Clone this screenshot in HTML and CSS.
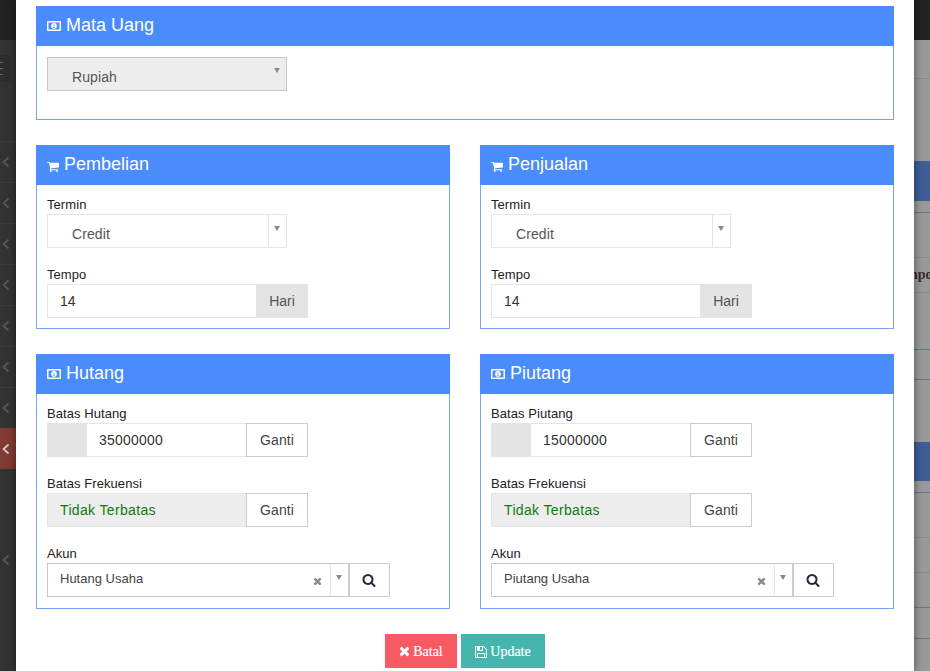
FILE: index.html
```html
<!DOCTYPE html>
<html lang="id">
<head>
<meta charset="utf-8">
<title>Pengaturan</title>
<link rel="stylesheet" href="styles.css">
</head>
<body>
<svg class="defs" width="0" height="0" aria-hidden="true">
  <symbol id="i-money" viewBox="0 0 14 10">
    <path fill-rule="evenodd" d="M1 0h12a1 1 0 0 1 1 1v8a1 1 0 0 1-1 1H1a1 1 0 0 1-1-1V1a1 1 0 0 1 1-1zM1.500 1.600v6.800h11V1.600zM7 2.100c1.700 0 2.900 1.300 2.900 2.900S8.700 7.900 7 7.900 4.100 6.600 4.100 5 5.300 2.100 7 2.100zM6.300 3.500v.7h.4v2.100h-.5v.6h1.500v-.6h-.4V3.500z"/>
  </symbol>
  <symbol id="i-cart" viewBox="0 128 1664 1536">
    <path d="M640 1536q0 52-38 90t-90 38-90-38-38-90 38-90 90-38 90 38 38 90zm896 0q0 52-38 90t-90 38-90-38-38-90 38-90 90-38 90 38 38 90zm128-1088v512q0 24-16.500 42.500t-40.500 21.500l-1044 122q13 60 13 70 0 16-24 64h920q26 0 45 19t19 45-19 45-45 19h-1024q-26 0-45-19t-19-45q0-11 8-31.500t16-36 21.500-40 15.500-29.500l-177-823h-204q-26 0-45-19t-19-45 19-45 45-19h256q16 0 28.500 6.500t19.500 15.500 13 24.500 8 26 5.500 29.500 4.500 26h1201q26 0 45 19t19 45z"/>
  </symbol>
  <symbol id="i-search" viewBox="0 0 1792 1792">
    <path d="M1216 832q0-185-131.500-316.500t-316.500-131.500-316.500 131.500-131.500 316.500 131.500 316.500 316.500 131.500 316.500-131.500 131.500-316.500zm512 832q0 52-38 90t-90 38q-54 0-90-38l-343-342q-179 124-399 124-143 0-273.500-55.500t-225-150-150-225-55.500-273.500 55.500-273.500 150-225 225-150 273.500-55.500 273.500 55.500 225 150 150 225 55.500 273.500q0 220-124 399l343 343q37 37 37 90z"/>
  </symbol>
  <symbol id="i-times" viewBox="0 256 1408 1408">
    <path d="M1298 1322q0 40-28 68l-136 136q-28 28-68 28t-68-28l-294-294-294 294q-28 28-68 28t-68-28l-136-136q-28-28-28-68t28-68l294-294-294-294q-28-28-28-68t28-68l136-136q28-28 68-28t68 28l294 294 294-294q28-28 68-28t68 28l136 136q28 28 28 68t-28 68l-294 294 294 294q28 28 28 68z"/>
  </symbol>
  <symbol id="i-save" viewBox="0 128 1536 1536">
    <path d="M384 1536h768v-384h-768v384zm896 0h128v-896q0-14-10-38.500t-20-34.500l-281-281q-10-10-34-20t-39-10v416q0 40-28 68t-68 28h-576q-40 0-68-28t-28-68v-416h-128v1280h128v-416q0-40 28-68t68-28h832q40 0 68 28t28 68v416zm-384-928v-320q0-13-9.500-22.500t-22.500-9.500h-192q-13 0-22.500 9.500t-9.500 22.500v320q0 13 9.500 22.500t22.500 9.500h192q13 0 22.500-9.500t9.500-22.500zm640 32v928q0 40-28 68t-68 28h-1344q-40 0-68-28t-28-68v-1344q0-40 28-68t68-28h928q40 0 88 20t76 48l280 280q28 28 48 76t20 88z"/>
  </symbol>
  <symbol id="i-chev" viewBox="0 0 8 10">
    <path d="M6.500 0.500 1.500 5l5 4.500" fill="none" stroke="currentColor" stroke-width="1.800"/>
  </symbol>
</svg>

<div class="backdrop">
  <aside class="side">
    <div class="side-top"></div>
    <div class="side-burger"><div class="burger-box"><span></span><span></span><span></span></div></div>
    <div class="side-row"><svg class="chev"><use href="#i-chev"/></svg></div>
    <div class="side-row"><svg class="chev"><use href="#i-chev"/></svg></div>
    <div class="side-row"><svg class="chev"><use href="#i-chev"/></svg></div>
    <div class="side-row"><svg class="chev"><use href="#i-chev"/></svg></div>
    <div class="side-row"><svg class="chev"><use href="#i-chev"/></svg></div>
    <div class="side-row"><svg class="chev"><use href="#i-chev"/></svg></div>
    <div class="side-row"><svg class="chev"><use href="#i-chev"/></svg></div>
    <div class="side-row side-active"><svg class="chev"><use href="#i-chev"/></svg></div>
    <div class="side-row side-plain"><svg class="chev"><use href="#i-chev"/></svg></div>
  </aside>
  <div class="right">
    <div class="r r-top"></div>
    <div class="r r-a"></div>
    <div class="r r-b"></div>
    <div class="r r-band1"></div>
    <div class="r r-c"></div>
    <div class="r r-d"></div>
    <div class="r r-e"><span class="clip">npo</span></div>
    <div class="r r-f"></div>
    <div class="r r-g"></div>
    <div class="r r-h"></div>
    <div class="r r-band2"></div>
    <div class="r r-i"></div>
    <div class="r r-j"></div>
    <div class="r r-k"></div>
    <div class="r r-l"></div>
    <div class="r r-m"></div>
    <div class="r r-n"></div>
  </div>
</div>

<main class="modal">
  <section class="panel panel-mata">
    <h3 class="panel-head"><svg class="ico-money"><use href="#i-money"/></svg>Mata Uang</h3>
    <div class="panel-body">
      <div class="select select-disabled">
        <span class="select-text">Rupiah</span>
        <span class="arrow arrow-bare"></span>
      </div>
    </div>
  </section>

  <div class="cols">
    <section class="panel">
      <h3 class="panel-head"><svg class="ico-cart"><use href="#i-cart"/></svg>Pembelian</h3>
      <div class="panel-body">
        <div class="field">
          <label class="label">Termin</label>
          <div class="select"><span class="select-text">Credit</span><span class="arrow-box"><span class="arrow"></span></span></div>
        </div>
        <div class="field">
          <label class="label">Tempo</label>
          <div class="group group-tempo"><span class="input input-grow">14</span><span class="addon addon-hari">Hari</span></div>
        </div>
      </div>
    </section>
    <section class="panel">
      <h3 class="panel-head"><svg class="ico-cart"><use href="#i-cart"/></svg>Penjualan</h3>
      <div class="panel-body">
        <div class="field">
          <label class="label">Termin</label>
          <div class="select"><span class="select-text">Credit</span><span class="arrow-box"><span class="arrow"></span></span></div>
        </div>
        <div class="field">
          <label class="label">Tempo</label>
          <div class="group group-tempo"><span class="input input-grow">14</span><span class="addon addon-hari">Hari</span></div>
        </div>
      </div>
    </section>
  </div>

  <div class="cols cols-tall">
    <section class="panel">
      <h3 class="panel-head"><svg class="ico-money"><use href="#i-money"/></svg>Hutang</h3>
      <div class="panel-body">
        <div class="field">
          <label class="label">Batas Hutang</label>
          <div class="group"><span class="addon addon-cur"></span><span class="input input-money">35000000</span><span class="btn-ganti">Ganti</span></div>
        </div>
        <div class="field">
          <label class="label">Batas Frekuensi</label>
          <div class="group"><span class="input input-ro">Tidak Terbatas</span><span class="btn-ganti">Ganti</span></div>
        </div>
        <div class="field">
          <label class="label">Akun</label>
          <div class="group group-akun">
            <div class="akun-select"><span class="akun-text">Hutang Usaha</span><svg class="akun-x"><use href="#i-times"/></svg><span class="akun-arrow"><span class="arrow"></span></span></div>
            <span class="btn-search"><svg class="ico-search"><use href="#i-search"/></svg></span>
          </div>
        </div>
      </div>
    </section>
    <section class="panel">
      <h3 class="panel-head"><svg class="ico-money"><use href="#i-money"/></svg>Piutang</h3>
      <div class="panel-body">
        <div class="field">
          <label class="label">Batas Piutang</label>
          <div class="group"><span class="addon addon-cur"></span><span class="input input-money">15000000</span><span class="btn-ganti">Ganti</span></div>
        </div>
        <div class="field">
          <label class="label">Batas Frekuensi</label>
          <div class="group"><span class="input input-ro">Tidak Terbatas</span><span class="btn-ganti">Ganti</span></div>
        </div>
        <div class="field">
          <label class="label">Akun</label>
          <div class="group group-akun">
            <div class="akun-select"><span class="akun-text">Piutang Usaha</span><svg class="akun-x"><use href="#i-times"/></svg><span class="akun-arrow"><span class="arrow"></span></span></div>
            <span class="btn-search"><svg class="ico-search"><use href="#i-search"/></svg></span>
          </div>
        </div>
      </div>
    </section>
  </div>

  <div class="actions">
    <button class="btn btn-batal" type="button"><svg class="ico-times"><use href="#i-times"/></svg>Batal</button>
    <button class="btn btn-update" type="button"><svg class="ico-save"><use href="#i-save"/></svg>Update</button>
  </div>
</main>
</body>
</html>
```
FILE: styles.css
```css
* { box-sizing: border-box; }
html, body { margin: 0; height: 100%; overflow: hidden; }
body { position: relative; width: 930px; height: 671px; font-family: "Liberation Sans", Arial, sans-serif; font-size: 14px; color: #333; background: #999; }
.defs { position: absolute; }

/* page behind the dialog */
.backdrop { display: flex; justify-content: space-between; height: 671px; }
.side { width: 16px; background: #333; display: flex; flex-direction: column; }
.side-top { height: 40px; background: #222; }
.side-burger { height: 101px; padding-top: 15px; }
.burger-box { width: 10px; height: 27px; background: #2c2c2c; padding-top: 7px; display: flex; flex-direction: column; gap: 5px; }
.burger-box span { display: block; width: 3px; height: 1px; background: #666; }
.side-row { height: 41px; border-top: 1px solid #3c3c3c; display: flex; align-items: center; padding-left: 2px; color: #575757; }
.side-active { background: #823a34; border-top: 0; color: #ccc; }
.side-plain { border-top: 0; height: 182px; }
.chev { width: 8px; height: 10px; }

.right { width: 16px; display: flex; flex-direction: column; background: #999; }
.r { border-bottom: 1px solid #8a8a8a; }
.r-top { height: 40px; background: #222; border: 0; }
.r-a { height: 39px; }
.r-b { height: 82px; border: 0; }
.r-band1 { height: 40px; background: #3d5e96; border: 0; }
.r-c { height: 12px; border-bottom-color: #5b7a92; }
.r-d { height: 45px; }
.r-e { height: 35px; overflow: hidden; font: bold 14px/34px "Liberation Serif", serif; color: #3a2a2a; }
.clip { display: block; margin-left: -4px; white-space: nowrap; }
.r-f { height: 58px; border-bottom-color: #5b7a92; }
.r-g { height: 30px; border-bottom-color: #5b7a92; }
.r-h { height: 62px; border: 0; }
.r-band2 { height: 39px; background: #3d5e96; border: 0; }
.r-i { height: 12px; border-bottom-color: #5b7a92; }
.r-j { height: 45px; }
.r-k { height: 35px; }
.r-l { height: 35px; border-bottom-color: #5b7a92; }
.r-m { height: 31px; border-bottom-color: #5b7a92; }
.r-n { height: 32px; border: 0; }

/* dialog */
.modal { position: absolute; left: 16px; top: 0; width: 898px; height: 671px; padding: 6px 20px 0; background: #fff; overflow: hidden; box-shadow: 0 0 8px rgba(0,0,0,.5); display: flex; flex-direction: column; gap: 25px; }
.cols { display: grid; grid-template-columns: 414px 414px; gap: 30px; }
.panel { border: 1px solid #74a5f5; border-top: 0; background: #fff; display: flex; flex-direction: column; }
.panel-head { margin: 0; height: 40px; margin-inline: -1px; padding: 0 0 2px 11px; background: #4a8cfb; color: #fff; font-size: 18px; font-weight: 400; display: flex; align-items: center; }
.panel-body { padding: 10px; display: flex; flex-direction: column; gap: 17px; }
.cols-tall .panel-body { padding-bottom: 11px; }
.panel-mata { height: 114px; }
.panel-mata .panel-body { padding-top: 11px; }
.ico-money { width: 14px; height: 10px; margin-right: 5px; fill: #fff; margin-top: 2px; }
.ico-cart { width: 12px; height: 11px; margin-right: 5px; fill: #fff; margin-top: 4px; }

.field { display: flex; flex-direction: column; }
.label { height: 19px; line-height: 20px; font-size: 13px; letter-spacing: .07px; font-weight: 400; color: #222; }

.select { position: relative; width: 240px; height: 34px; border: 1px solid #e5e5e5; display: flex; align-items: center; background: #fff; }
.select-text { flex: 1; padding: 5px 0 0 24px; color: #555; letter-spacing: .1px; }
.select-disabled { background: #ededed; border-color: #c8c8c8; }
.arrow { display: block; width: 0; height: 0; border-left: 3px solid transparent; border-right: 3px solid transparent; border-top: 5px solid #888; }
.arrow-bare { margin: -8px 6px 0 0; }
.arrow-box { width: 18px; align-self: stretch; border-left: 1px solid #e5e5e5; display: flex; justify-content: center; padding: 11px 1px 0 0; }

.group { display: flex; width: 261px; height: 34px; }
.input { display: flex; align-items: center; height: 34px; border: 1px solid #e5e5e5; color: #333; background: #fff; }
.input-grow { width: 209px; padding-left: 12px; border-right: 0; }
.addon { display: flex; align-items: center; justify-content: center; background: #e4e4e4; color: #555; height: 34px; }
.addon-hari { width: 52px; }
.addon-cur { width: 40px; }
.input-money { width: 159px; padding-left: 12px; border-left: 0; border-right: 0; letter-spacing: .2px; }
.input-ro { width: 199px; padding-left: 12px; background: #ededed; color: #107a10; border-right: 0; letter-spacing: .35px; }
.btn-ganti { width: 62px; height: 34px; border: 1px solid #ccc; display: flex; align-items: center; justify-content: center; color: #444; background: #fff; letter-spacing: .1px; }

.group-akun { width: 343px; }
.akun-select { width: 301px; height: 34px; border: 1px solid #c8c8c8; border-right: 0; display: flex; align-items: center; background: #fff; position: relative; }
.akun-text { flex: 1; padding: 0 0 4px 12px; font-size: 13px; color: #444; }
.akun-x { width: 9px; height: 9px; fill: #888; margin: 3px 8px 0 0; }
.akun-arrow { width: 18px; align-self: stretch; border-left: 1px solid #e5e5e5; display: flex; justify-content: center; padding: 11px 1px 0 0; }
.btn-search { width: 42px; height: 34px; border: 1px solid #ccc; border-left: 2px solid #ccc; display: flex; align-items: center; justify-content: center; padding-right: 1px; }
.ico-search { width: 14px; height: 14px; fill: #1f2d3d; }

.actions { display: flex; justify-content: center; gap: 4px; }
.btn { height: 34px; border: 0; color: #fff; font: 14px "Liberation Serif", "Times New Roman", serif; display: flex; align-items: center; justify-content: center; padding: 2px 0 0; -webkit-text-stroke: .2px #fff; }
.btn-batal { width: 72px; background: #f65a63; }
.btn-update { width: 84px; background: #45b6ae; }
.ico-times { width: 11px; height: 11px; fill: #fff; margin: -1px 3px 0 0; }
.ico-save { width: 12px; height: 12px; fill: #fff; margin: -1px 3px 0 0; }
```
